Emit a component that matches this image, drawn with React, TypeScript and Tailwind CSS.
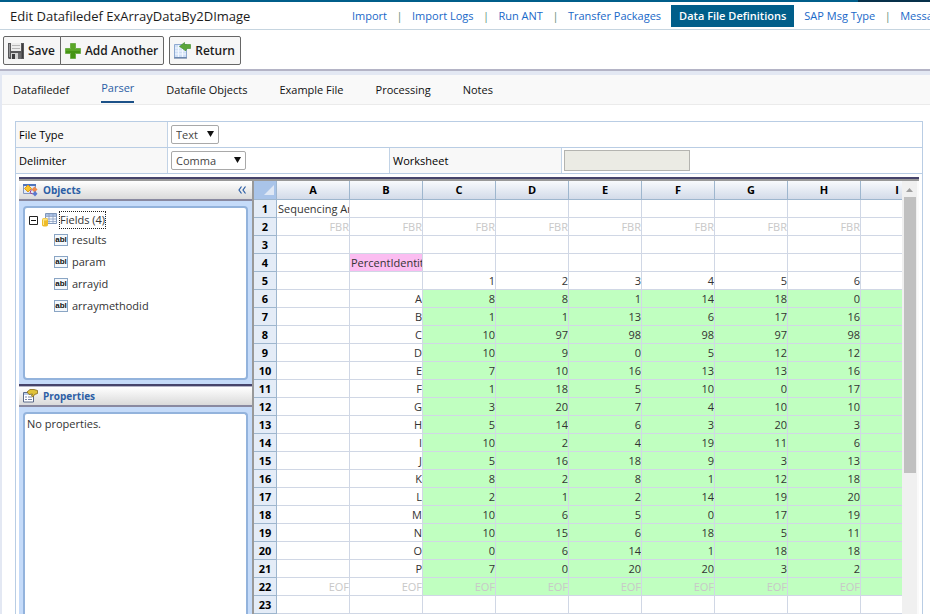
import type { ReactNode } from "react";

const NAV_LEFT = ["Import", "Import Logs", "Run ANT", "Transfer Packages"];
const NAV_RIGHT = ["SAP Msg Type", "Message Log"];

const TABS = [
    "Datafiledef",
    "Parser",
    "Datafile Objects",
    "Example File",
    "Processing",
    "Notes",
];

const FIELDS = ["results", "param", "arrayid", "arraymethodid"];

const COLUMNS = ["A", "B", "C", "D", "E", "F", "G", "H", "I"];

// Plate readings, one entry per well row (A to P), six visible columns each.
const PLATE: [string, number[]][] = [
    ["A", [8, 8, 1, 14, 18, 0]],
    ["B", [1, 1, 13, 6, 17, 16]],
    ["C", [10, 97, 98, 98, 97, 98]],
    ["D", [10, 9, 0, 5, 12, 12]],
    ["E", [7, 10, 16, 13, 13, 16]],
    ["F", [1, 18, 5, 10, 0, 17]],
    ["G", [3, 20, 7, 4, 10, 10]],
    ["H", [5, 14, 6, 3, 20, 3]],
    ["I", [10, 2, 4, 19, 11, 6]],
    ["J", [5, 16, 18, 9, 3, 13]],
    ["K", [8, 2, 8, 1, 12, 18]],
    ["L", [2, 1, 2, 14, 19, 20]],
    ["M", [10, 6, 5, 0, 17, 19]],
    ["N", [10, 15, 6, 18, 5, 11]],
    ["O", [0, 6, 14, 1, 18, 18]],
    ["P", [7, 0, 20, 20, 3, 2]],
];

const blank = () => Array<string>(9).fill("");

const ROWS: string[][] = [
    ["Sequencing Array", ...Array<string>(8).fill("")],
    [...Array<string>(8).fill("FBR"), ""],
    blank(),
    ["", "PercentIdentity", ...Array<string>(7).fill("")],
    ["", "", "1", "2", "3", "4", "5", "6", ""],
    ...PLATE.map(([name, values]) => ["", name, ...values.map(String), ""]),
    [...Array<string>(8).fill("EOF"), ""],
    blank(),
    blank(),
];

function SaveIcon() {
    return (
        <svg width="16" height="16" viewBox="0 0 16 16" aria-hidden="true">
            <path d="M0 0h16v16H1l-1-1z" fill="#58585a" />
            <path d="M3 0h10v8H3z" fill="#ececec" />
            <path d="M4 2.500h8M4 5.500h8" stroke="#b5b5b5" />
            <path d="M3 10h10v6H3z" fill="#d4d4d4" />
            <path d="M4 11h3v5H4z" fill="#3c3c3e" />
            <path d="M10 10h3v6h-3z" fill="#6b6b6e" />
            <path d="M1.500 1v13" stroke="#939395" />
            <path d="M14.500 1v14" stroke="#3c3c3e" />
        </svg>
    );
}

function AddIcon() {
    return (
        <svg width="16" height="16" viewBox="0 0 16 16" aria-hidden="true">
            <path d="M5.500.5h5v5h5v5h-5v5h-5v-5h-5v-5h5z" fill="#5aa626" stroke="#6fae4a" />
            <path d="M6 10v5h4v-5h5V8H1v2z" fill="#459414" />
        </svg>
    );
}

function ReturnIcon() {
    return (
        <svg width="17" height="17" viewBox="0 0 17 17" aria-hidden="true">
            <path d="M.5 2.500h12v13H.5z" fill="#cfdff6" stroke="#8ea9d0" />
            <path d="M1 6h11M1 9h11M1 12h11M4.500 3v12M8.500 3v12" stroke="#f3f8ff" />
            <path d="M0 16h13" stroke="#48648f" />
            <path d="M5.500 4.500 10.500.5v2h6v4h-3.500L11.500 9 10 7.500z" fill="#5ba63a" stroke="#3d8a2a" strokeWidth=".6" />
        </svg>
    );
}

function ObjectsIcon() {
    return (
        <svg width="15" height="14" viewBox="0 0 15 14" aria-hidden="true">
            <path d="M.5 1.500h12v9H.5z" fill="#dfe9fa" stroke="#8296bd" />
            <path d="M0 1h13v2H0z" fill="#4e74bb" />
            <path d="m5 2 3.500 3.500L5 9 1.500 5.500z" fill="#f8c52c" stroke="#dd9a1f" />
            <path d="m11.500 3.500 3 3-3 3-3-3z" fill="#ee8a4c" />
            <path d="m12 8 2.500 2.700L12 13.500 9.500 10.700z" fill="#5a78cf" />
            <path d="m8.500 6.500-1.500 3 2.500 1.500" fill="none" stroke="#a03a8a" />
        </svg>
    );
}

function PropertiesIcon() {
    return (
        <svg width="15" height="14" viewBox="0 0 15 14" aria-hidden="true">
            <path d="M.5 3.500h10v9.500H.5z" fill="#fff" stroke="#5a6a8a" />
            <path d="M1 4h9v2H1z" fill="#b8cbec" />
            <path d="M2 8h2M5 8h4M2 10.500h2M5 10.500h4" stroke="#7886a8" />
            <path d="M4 3 7 .5h4l3.500 1v3l-3 1L10 8 8.500 7l1-2L6 5.500z" fill="#e0c23a" stroke="#84691a" strokeWidth=".8" />
        </svg>
    );
}

function TableIcon() {
    return (
        <svg width="15" height="14" viewBox="0 0 15 14" aria-hidden="true">
            <path d="M3.500.5h11v10h-11z" fill="#f4f8ff" stroke="#7f97ba" />
            <path d="M4 1h10v2H4z" fill="#a9c0e4" />
            <path d="M3 3.500h12M3 6h12M3 8.500h12M7 1v10M11 1v10" stroke="#8ba0c0" strokeWidth=".8" />
            <path d="M0 6.500C0 4.500 6 4.500 6 6.500v5.500c0 2-6 2-6 0z" fill="#eebc2a" />
            <path d="M1.500 6v6" stroke="#fde994" />
            <ellipse cx="3" cy="6.500" rx="2.700" ry="1" fill="#fbe27c" />
        </svg>
    );
}

function SelectBox({ id, value, width }: { id: string; value: string; width: string }) {
    return (
        <div className={`relative ${width}`}>
            <select
                id={id}
                defaultValue={value}
                className="block h-[19px] w-full appearance-none rounded-[2px] border border-[#a9a9a9] bg-white pl-1 text-[11px] leading-4 text-[#444]"
            >
                <option>{value}</option>
            </select>
            <svg
                width="7"
                height="6"
                viewBox="0 0 7 6"
                aria-hidden="true"
                className="pointer-events-none absolute right-[5px] top-1.5"
            >
                <path d="M0 0h7L3.500 6z" fill="#111" />
            </svg>
        </div>
    );
}

function PanelHeader({ icon, title, children }: { icon: ReactNode; title: string; children?: ReactNode }) {
    return (
        <div className="flex h-5 shrink-0 items-center gap-[5px] border-b-2 border-[#8989a0] bg-linear-to-b from-white to-[#dadada] px-1">
            {icon}
            <h2 className="text-[10px] font-bold leading-4 text-[#2c5ea5]">{title}</h2>
            {children}
        </div>
    );
}

function NavLink({ children }: { children: string }) {
    return (
        <a href="#" className="text-[#1868c8]">
            {children}
        </a>
    );
}

function Header() {
    return (
        <header className="flex h-7 shrink-0 items-center overflow-hidden whitespace-nowrap border-b border-[#c6d5e0] pl-2.5">
            <h1 className="w-[342px] shrink-0 text-[13px] font-medium leading-5 text-[#1c1c1c]">
                Edit Datafiledef ExArrayDataBy2DImage
            </h1>
            <nav className="flex items-center text-[11px] font-medium leading-[22px]">
                {NAV_LEFT.map((label, i) => (
                    <span key={label} className="flex">
                        {i > 0 && <span className="w-[25px] text-center text-[#5f8f7a]">|</span>}
                        <NavLink>{label}</NavLink>
                    </span>
                ))}
                <a href="#" aria-current="page" className="mx-2.5 bg-[#005e8a] px-2 font-semibold text-white">
                    Data File Definitions
                </a>
                {NAV_RIGHT.map((label, i) => (
                    <span key={label} className="flex">
                        {i > 0 && <span className="w-[25px] text-center text-[#5f8f7a]">|</span>}
                        <NavLink>{label}</NavLink>
                    </span>
                ))}
            </nav>
        </header>
    );
}

function Toolbar() {
    const button =
        "flex h-[29px] items-center gap-1 border border-[#666] bg-[#f6f6f6] pl-1 pr-[5px] text-[12px] font-semibold text-[#1c1c1c]";

    return (
        <div className="flex h-[41px] shrink-0 items-center border-b-2 border-[#b4b4c6] pl-[3px] pt-0.5">
            <button type="button" className={`${button} rounded-l-[2px]`}>
                <SaveIcon />
                Save
            </button>
            <button type="button" className={`${button} -ml-px rounded-r-[2px]`}>
                <AddIcon />
                Add Another
            </button>
            <button type="button" className={`${button} ml-[5px] rounded-[2px]`}>
                <ReturnIcon />
                Return
            </button>
        </div>
    );
}

function ParserForm() {
    const label = "flex shrink-0 items-center border-r border-[#c2d3e6] bg-[#f8f8f8] pl-[3px] pt-0.5";

    return (
        <div className="shrink-0 text-[11px] font-medium text-black">
            <div className="flex h-[26px] border-b border-[#b9cde4]">
                <label htmlFor="file-type" className={`${label} w-[152px]`}>
                    File Type
                </label>
                <div className="flex items-center pl-[3px] font-normal">
                    <SelectBox id="file-type" value="Text" width="w-12" />
                </div>
            </div>
            <div className="flex h-[26px] border-b border-[#b9cde4]">
                <label htmlFor="delimiter" className={`${label} w-[152px]`}>
                    Delimiter
                </label>
                <div className="flex w-[222px] items-center border-r border-[#c2d3e6] pl-[3px] font-normal">
                    <SelectBox id="delimiter" value="Comma" width="w-[75px]" />
                </div>
                <label htmlFor="worksheet" className={`${label} w-[172px]`}>
                    Worksheet
                </label>
                <div className="flex items-center pl-0.5">
                    <input
                        id="worksheet"
                        type="text"
                        disabled
                        className="h-[21px] w-[126px] border border-[#b4b4b0] bg-[#ebebe4]"
                    />
                </div>
            </div>
        </div>
    );
}

function SidePanels() {
    return (
        <aside className="flex w-[233px] shrink-0 flex-col bg-[#c5dbf9]">
            <PanelHeader icon={<ObjectsIcon />} title="Objects">
                <button type="button" aria-label="Collapse panel" className="ml-auto mr-0.5 text-[#2c5ea5]">
                    <svg width="8" height="8" viewBox="0 0 8 8" fill="none" stroke="currentColor" aria-hidden="true">
                        <path d="M3.500.5 1 4l2.500 3.500M7.500.5 5 4l2.500 3.500" strokeWidth="1.200" />
                    </svg>
                </button>
            </PanelHeader>
            <div className="mx-1 mb-1 mt-[5px] h-[174px] shrink-0 rounded-[4px] border-2 border-[#93b3dc] bg-white px-1 pt-[3px] text-[11px] text-[#333]">
                <div className="flex h-[18px] items-center">
                    <svg width="9" height="9" viewBox="0 0 9 9" aria-hidden="true">
                        <path d="M.5.5h8v8h-8z" fill="#fff" stroke="#222" />
                        <path d="M2 4.500h5" stroke="#111" />
                    </svg>
                    <span className="ml-1 flex items-center gap-0.5">
                        <TableIcon />
                        <span className="border border-dotted border-[#222] leading-4">Fields (4)</span>
                    </span>
                </div>
                <ul className="pl-[25px]">
                    {FIELDS.map((field) => (
                        <li key={field} className="flex h-[22px] items-center gap-1">
                            <span className="h-3 w-3.5 border border-[#8aa5c4] bg-[#f4f8fc] text-center font-['Liberation_Sans',sans-serif] text-[8px] font-bold leading-[9px] text-[#111]">
                                abl
                            </span>
                            {field}
                        </li>
                    ))}
                </ul>
            </div>
            <div className="h-[3px] shrink-0 border-b border-[#b4b4c6] bg-[#46446b]" />
            <PanelHeader icon={<PropertiesIcon />} title="Properties" />
            <div className="mx-1 mt-[5px] flex-1 rounded-t-[4px] border-2 border-b-0 border-[#93b3dc] bg-white px-0.5 pt-0.5 text-[11px] leading-4 text-[#333]">
                No properties.
            </div>
        </aside>
    );
}

function cellClass(row: number, col: number, value: string) {
    const fill =
        row === 3 && col === 1
            ? "bg-[#fbbdf1]"
            : row >= 5 && row <= 21 && col >= 2
              ? "bg-[#c0ffc0]"
              : "bg-white";
    const align = value.length > 3 ? "text-left" : "text-right";
    const color = value === "FBR" || value === "EOF" ? "text-[#c8c8c8]" : "text-[#333]";

    return `h-[18px] overflow-hidden whitespace-nowrap border-b border-r border-[#d0d7e5] p-0 pl-px leading-4 ${fill} ${align} ${color}`;
}

function Sheet() {
    return (
        <div className="min-w-0 flex-1 overflow-hidden">
            <table className="w-[680px] table-fixed border-separate border-spacing-0 text-[11px]">
                <colgroup>
                    <col className="w-[23px]" />
                    {COLUMNS.map((name) => (
                        <col key={name} className="w-[73px]" />
                    ))}
                </colgroup>
                <thead>
                    <tr>
                        <th className="h-[19px] border-b border-r border-[#9eb6ce] bg-[#a9c4e9] p-0" aria-label="Select all">
                            <svg width="10" height="10" viewBox="0 0 10 10" className="ml-auto mr-0.5" aria-hidden="true">
                                <path d="M10 0v10H0z" fill="#dfe8f5" />
                            </svg>
                        </th>
                        {COLUMNS.map((name) => (
                            <th
                                key={name}
                                scope="col"
                                className="h-[19px] border-b border-r border-[#9eb6ce] bg-linear-to-b from-[#f8fafd] to-[#d3dbe9] p-0 font-bold leading-4 text-black"
                            >
                                {name}
                            </th>
                        ))}
                    </tr>
                </thead>
                <tbody>
                    {ROWS.map((row, r) => (
                        <tr key={r}>
                            <th
                                scope="row"
                                className="h-[18px] border-b border-r border-[#9eb6ce] bg-[#e4ecf7] p-0 font-bold leading-4 text-black"
                            >
                                {r + 1}
                            </th>
                            {row.map((value, c) => (
                                <td key={c} className={cellClass(r, c, value)}>
                                    {value}
                                </td>
                            ))}
                        </tr>
                    ))}
                </tbody>
            </table>
        </div>
    );
}

function ScrollBar() {
    return (
        <div className="flex w-[15px] shrink-0 flex-col items-center bg-[#f0f0f0]">
            <svg width="7" height="4" viewBox="0 0 7 4" className="mb-[5px] mt-[7px] shrink-0" aria-hidden="true">
                <path d="M3.500 0 7 4H0z" fill="#a0a0a0" />
            </svg>
            <div className="h-[276px] w-3 shrink-0 bg-[#c0c0c0]" />
        </div>
    );
}

export default function App() {
    return (
        <div className="flex h-screen flex-col overflow-hidden bg-white font-['Open_Sans',sans-serif]">
            <div className="flex h-0.5 shrink-0 justify-end bg-[#005e8a]">
                <div className="w-[72px] bg-[#06304a]" />
            </div>
            <Header />
            <Toolbar />
            <main className="flex min-h-0 flex-1 flex-col border-l-2 border-t-4 border-[#e3e8f3]">
                <nav className="flex h-[30px] shrink-0 items-center gap-8 border-b border-[#ebebeb] bg-[#f9f9f9] px-[11px] pt-0.5 text-[11px] font-medium text-[#111]">
                    {TABS.map((tab) =>
                        tab === "Parser" ? (
                            <a
                                key={tab}
                                href="#"
                                aria-current="page"
                                className="border-b-2 border-[#1c5188] pb-1 leading-[18px] text-[#2c5ea5]"
                            >
                                {tab}
                            </a>
                        ) : (
                            <a key={tab} href="#">
                                {tab}
                            </a>
                        )
                    )}
                </nav>
                <div className="ml-[13px] mr-[7px] mt-4 flex min-h-0 flex-1 flex-col border border-b-0 border-[#b9cde4]">
                    <ParserForm />
                    <div className="ml-[3px] mr-[3px] mt-[3px] flex min-h-0 flex-1 flex-col">
                        <div className="h-1 shrink-0 border-t-2 border-[#46446b] bg-[#999]" />
                        <div className="flex min-h-0 flex-1">
                            <SidePanels />
                            <div className="w-0.5 shrink-0 bg-[#999]" />
                            <Sheet />
                            <ScrollBar />
                            <div className="w-0.5 shrink-0 bg-[#fafafa]" />
                        </div>
                    </div>
                </div>
            </main>
        </div>
    );
}
